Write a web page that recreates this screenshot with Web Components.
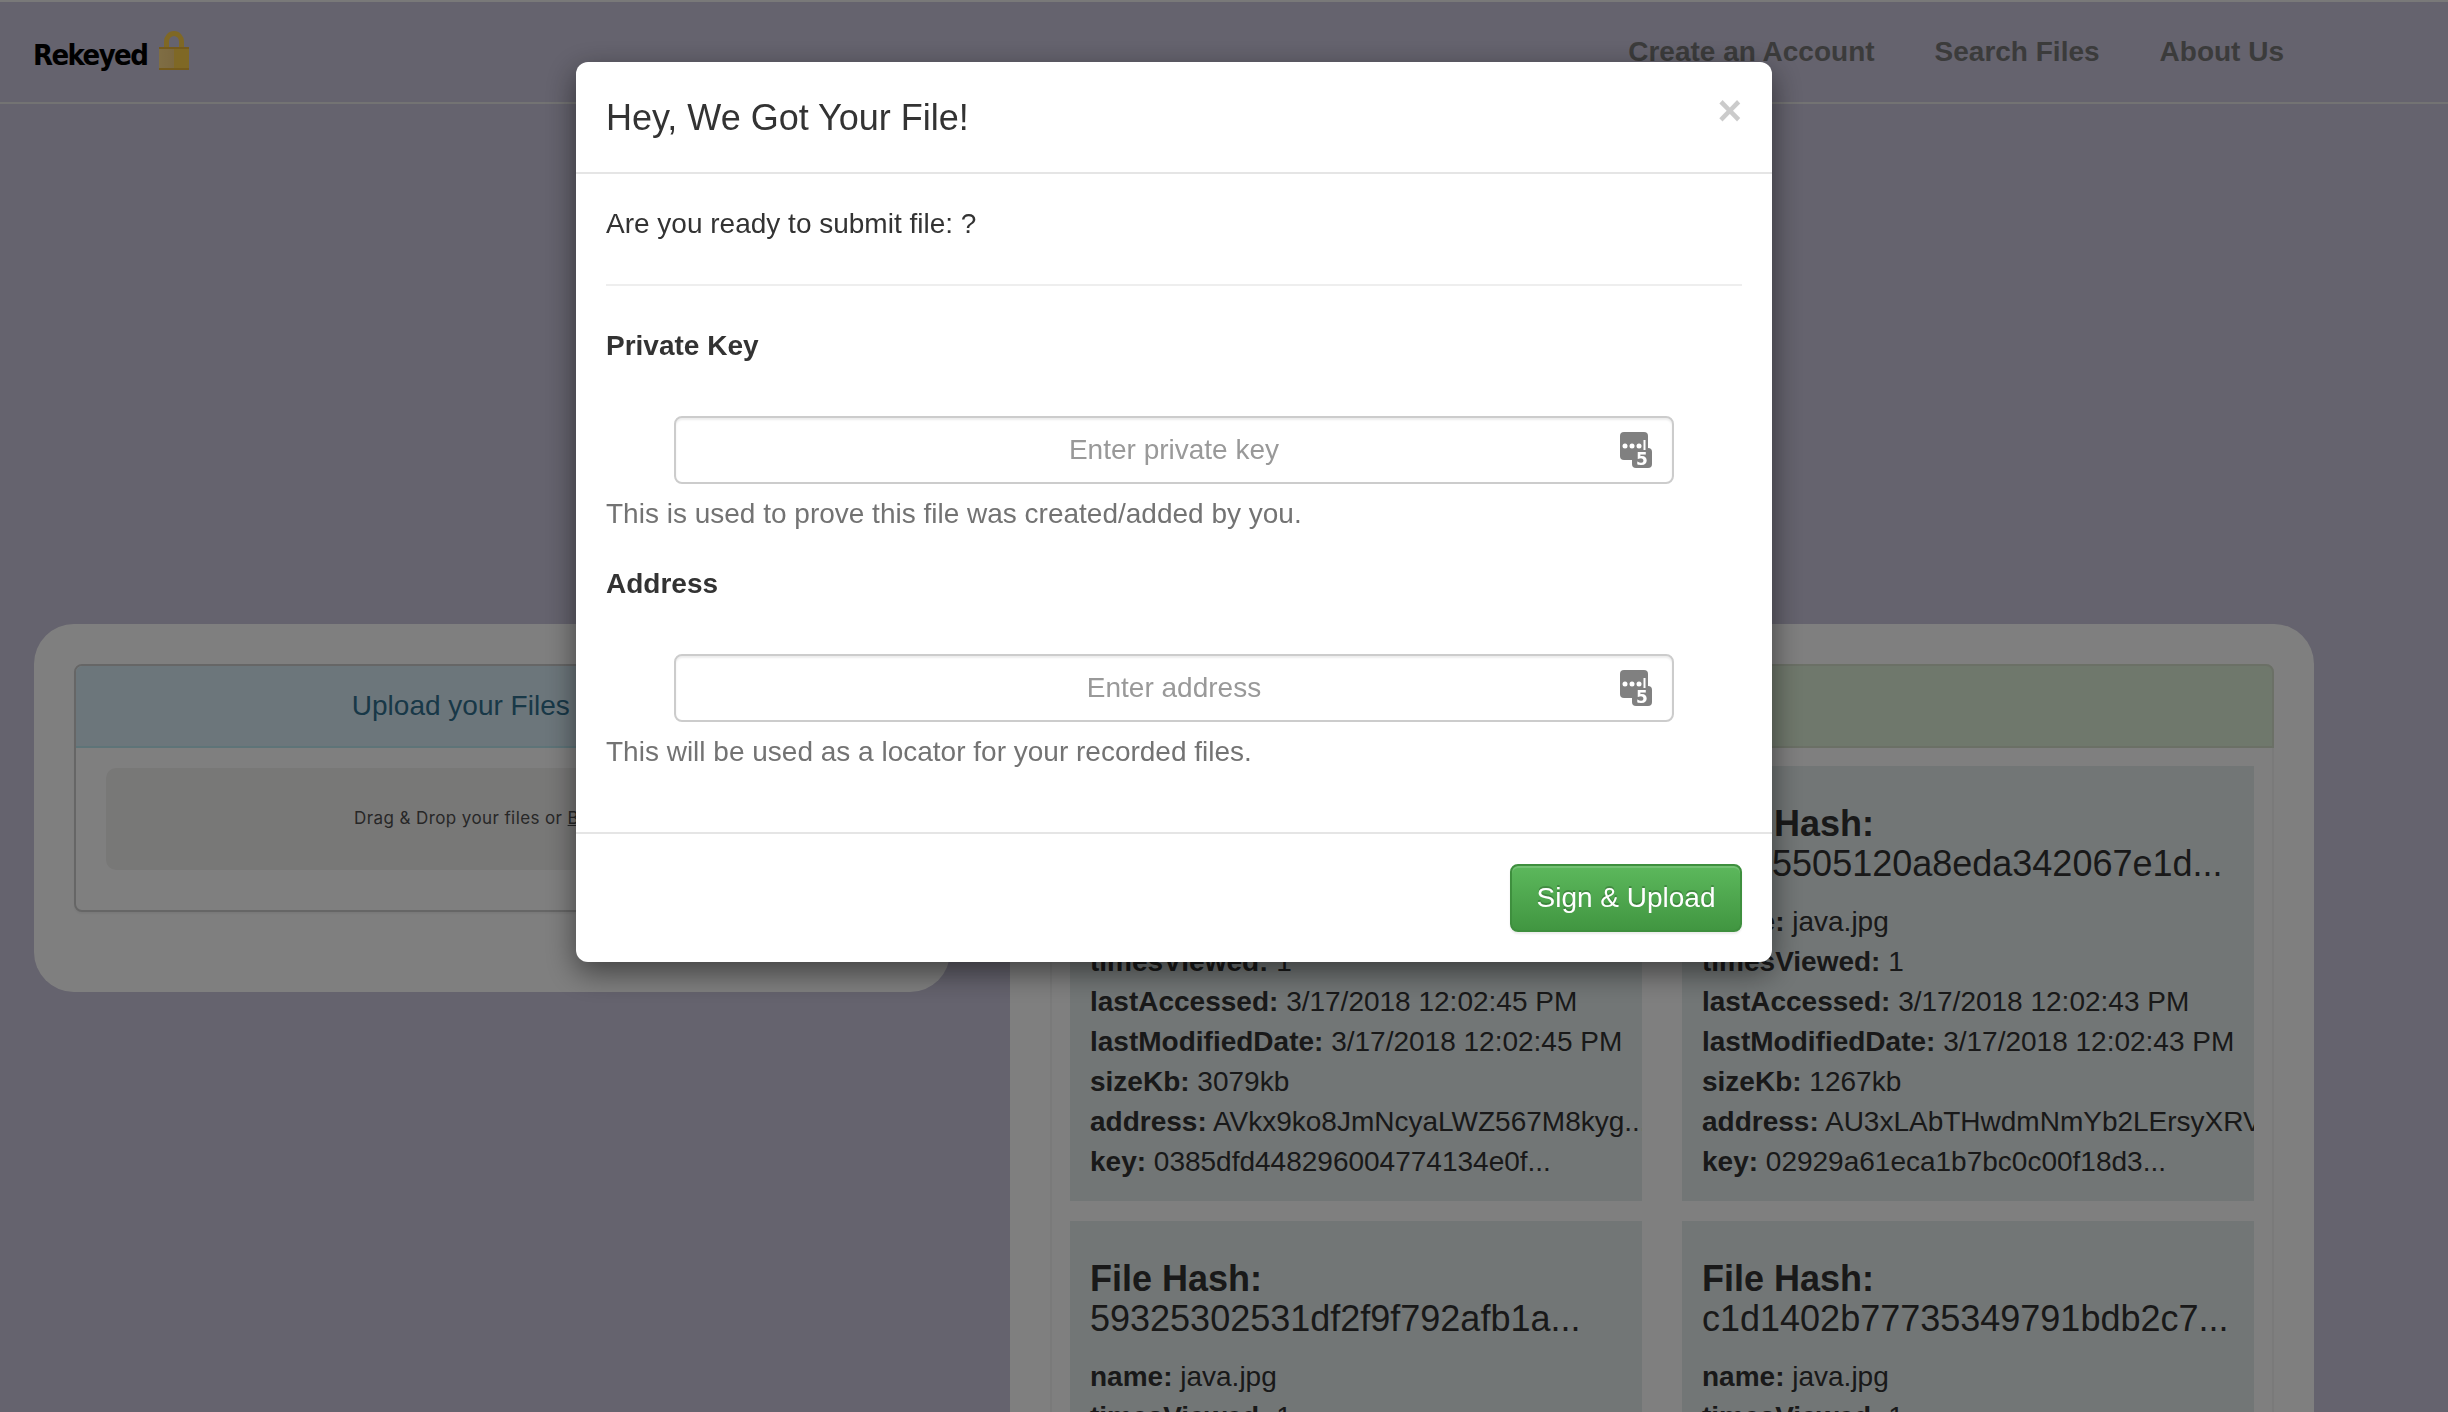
<!DOCTYPE html>
<html>
<head>
<meta charset="utf-8">
<title>Rekeyed</title>
<style>
  html, body { height: 100%; }
  body {
    margin: 0;
    height: 1412px;
    overflow: hidden;
    background: #cac6dc;
    color: #333;
    font: 28px/40px "Liberation Sans", Arial, sans-serif;
  }
</style>
</head>
<body>
<rk-navbar>
  <a slot="links">Create an Account</a>
  <a slot="links">Search Files</a>
  <a slot="links">About Us</a>
</rk-navbar>

<rk-page>
  <rk-panel slot="left" heading="Upload your Files Here" tone="info">
    <rk-dropzone>Drag &amp; Drop your files or <u>Browse</u></rk-dropzone>
  </rk-panel>
  <rk-panel slot="right" heading="Recorded Files" tone="success" flush>
    <rk-file-grid>
      <rk-file-card hash="d7e2a1f09c4b7f3e60d81a2c5...">
        <rk-row label="name">java.jpg</rk-row>
        <rk-row label="timesViewed">1</rk-row>
        <rk-row label="lastAccessed">3/17/2018 12:02:45 PM</rk-row>
        <rk-row label="lastModifiedDate">3/17/2018 12:02:45 PM</rk-row>
        <rk-row label="sizeKb">3079kb</rk-row>
        <rk-row label="address">AVkx9ko8JmNcyaLWZ567M8kyg...</rk-row>
        <rk-row label="key">0385dfd448296004774134e0f...</rk-row>
      </rk-file-card>
      <rk-file-card hash="a3f45505120a8eda342067e1d...">
        <rk-row label="name">java.jpg</rk-row>
        <rk-row label="timesViewed">1</rk-row>
        <rk-row label="lastAccessed">3/17/2018 12:02:43 PM</rk-row>
        <rk-row label="lastModifiedDate">3/17/2018 12:02:43 PM</rk-row>
        <rk-row label="sizeKb">1267kb</rk-row>
        <rk-row label="address">AU3xLAbTHwdmNmYb2LErsyXRV...</rk-row>
        <rk-row label="key">02929a61eca1b7bc0c00f18d3...</rk-row>
      </rk-file-card>
      <rk-file-card hash="59325302531df2f9f792afb1a...">
        <rk-row label="name">java.jpg</rk-row>
        <rk-row label="timesViewed">1</rk-row>
      </rk-file-card>
      <rk-file-card hash="c1d1402b77735349791bdb2c7...">
        <rk-row label="name">java.jpg</rk-row>
        <rk-row label="timesViewed">1</rk-row>
      </rk-file-card>
    </rk-file-grid>
  </rk-panel>
</rk-page>

<rk-modal>
  <span slot="title">Hey, We Got Your File!</span>
  <p>Are you ready to submit file: ?</p>
  <hr style="margin: 40px 0; border: 0; border-top: 2px solid #eee">
  <rk-key-field label="Private Key" placeholder="Enter private key">This is used to prove this file was created/added by you.</rk-key-field>
  <rk-key-field label="Address" placeholder="Enter address">This will be used as a locator for your recorded files.</rk-key-field>
  <span slot="action">Sign &amp; Upload</span>
</rk-modal>

<script>
/** Create an HTML template element from a string template. */
const html = (strings, ...expressions) => {
  const template = document.createElement('template')
  template.innerHTML = strings.reduce((result, str, i) => result + str + (expressions[i] ?? ''), '')
  return template
}

/** Base class: clones the static template into an open shadow root. */
class Base extends HTMLElement {
  constructor() {
    super()
    this.attachShadow({ mode: 'open' })
    this.shadowRoot.appendChild(this.constructor.template.content.cloneNode(true))
  }
}

class Navbar extends Base {
  static template = html`
    <style>
      :host {
        display: flex;
        align-items: center;
        justify-content: space-between;
        box-sizing: border-box;
        height: 104px;
        border-top: 2px solid #f2f2f2;
        border-bottom: 2px solid #e7e7e7;
        padding: 0 164px 0 33px;
      }
      .brand {
        display: flex;
        align-items: center;
        gap: 12px;
        color: #000;
        font: 700 29px/40px "DejaVu Sans", sans-serif;
        font-stretch: condensed;
        letter-spacing: -1.6px;
      }
      .brand span { margin-top: 6px; }
      svg { display: block; margin-top: -2px; }
      nav {
        display: flex;
        gap: 60px;
        font-weight: 700;
        color: #777;
      }
      ::slotted(a) { color: #777; }
    </style>
    <div class="brand">
      <span>Rekeyed</span>
      <svg width="30" height="40" viewBox="0 0 30 40">
        <defs>
          <linearGradient id="fade" x1="0" x2="1" y1="0" y2="0">
            <stop offset="0" stop-color="#ffdc88"/>
            <stop offset=".5" stop-color="#f6d080"/>
            <stop offset=".5" stop-color="#ffd04a"/>
            <stop offset="1" stop-color="#ffd04a"/>
          </linearGradient>
        </defs>
        <path d="M7.5 17V10.5a7.5 8 0 0 1 15 0V17" fill="none" stroke="#ffd04a" stroke-width="5"/>
        <rect x="0" y="16" width="30" height="23" fill="url(#fade)"/>
        <rect x="0" y="16" width="30" height="2" fill="#e8b438"/>
        <rect x="0" y="37" width="30" height="2" fill="#e8b438"/>
      </svg>
    </div>
    <nav><slot name="links"></slot></nav>
  `
}

class Page extends Base {
  static template = html`
    <style>
      :host {
        display: flex;
        align-items: flex-start;
        gap: 60px;
        padding: 520px 0 0 34px;
      }
      .left { display: block; width: 916px; flex: none; }
      .right { display: block; width: 1304px; flex: none; }
    </style>
    <div class="left"><slot name="left"></slot></div>
    <div class="right"><slot name="right"></slot></div>
  `
}

class Panel extends Base {
  static template = html`
    <style>
      :host {
        display: block;
        background: #fff;
        border-radius: 40px;
        padding: 40px 40px 80px;
      }
      .box {
        border: 2px solid #ccc;
        border-radius: 8px;
        box-shadow: 0 2px 2px rgba(0, 0, 0, .05);
        background: #fff;
      }
      .heading {
        height: 80px;
        line-height: 80px;
        padding-left: 6px;
        text-align: center;
        color: #31708f;
        background: #d9edf7;
        border-bottom: 2px solid #bce8f1;
        border-radius: 6px 6px 0 0;
      }
      :host([tone=success]) .heading {
        color: #3c763d;
        background: #dff0d8;
      }
      .body { padding: 20px 30px 40px; }
      :host([flush]) .box {
        border-color: #f4f4f4;
        border-bottom: 0;
        box-shadow: none;
      }
      :host([flush]) .heading {
        margin: -2px -2px 0;
        border: 2px solid #d6e0cc;
        border-radius: 8px 8px 0 0;
      }
      :host([flush]) .body { padding: 18px 18px 0; }
    </style>
    <div class="box">
      <div class="heading"></div>
      <div class="body"><slot></slot></div>
    </div>
  `

  connectedCallback() {
    this.shadowRoot.querySelector('.heading').textContent = this.getAttribute('heading')
  }
}

class Dropzone extends Base {
  static template = html`
    <style>
      :host {
        display: block;
        height: 102px;
        border-radius: 10px;
        background: #f1f0ef;
        color: #4f4f4f;
        font: 17px/100px Inter, "Open Sans", sans-serif;
        letter-spacing: .4px;
        text-align: center;
      }
    </style>
    <slot></slot>
  `
}

class FileGrid extends Base {
  static template = html`
    <style>
      :host {
        display: grid;
        grid-template-columns: 572px 572px;
        gap: 20px 40px;
      }
    </style>
    <slot></slot>
  `
}

class FileCard extends Base {
  static template = html`
    <style>
      :host {
        display: block;
        overflow: hidden;
        background: #e4ecec;
        padding: 38px 0 19px 20px;
      }
      h3 {
        margin: 0 0 18px;
        font-size: 36px;
        line-height: 40px;
        font-weight: 500;
        white-space: nowrap;
      }
      b { display: block; font-weight: 700; }
    </style>
    <h3><b>File Hash:</b><span class="hash"></span></h3>
    <slot></slot>
  `

  connectedCallback() {
    this.shadowRoot.querySelector('.hash').textContent = this.getAttribute('hash')
  }
}

class Row extends Base {
  static template = html`
    <style>
      :host { display: block; white-space: nowrap; }
      b { font-weight: 700; }
    </style>
    <b></b> <slot></slot>
  `

  connectedCallback() {
    this.shadowRoot.querySelector('b').textContent = `${this.getAttribute('label')}:`
  }
}

class KeyField extends Base {
  static template = html`
    <style>
      :host { display: block; margin-bottom: 30px; }
      label { display: block; font-weight: 700; margin-bottom: 50px; }
      .input {
        position: relative;
        display: flex;
        box-sizing: border-box;
        width: 1000px;
        height: 68px;
        margin-left: 68px;
        border: 2px solid #ccc;
        border-radius: 8px;
        box-shadow: inset 0 2px 2px rgba(0, 0, 0, .075);
      }
      input {
        box-sizing: border-box;
        flex: 1;
        min-width: 0;
        margin: 0 60px;
        border: 0;
        outline: 0;
        background: none;
        padding: 0;
        text-align: center;
        color: #555;
        font: 28px "Liberation Sans", Arial, sans-serif;
      }
      input::placeholder { color: #999; opacity: 1; }
      svg { position: absolute; right: 18px; top: 14px; }
      text { font: 700 17px "DejaVu Sans", sans-serif; }
      .help { margin-top: 10px; color: #737373; }
    </style>
    <label></label>
    <div class="input">
      <input type="text">
      <svg width="34" height="38" viewBox="0 0 34 38">
        <rect x="0" y="0" width="28" height="28" rx="4" fill="#808080"/>
        <rect x="12" y="16" width="20" height="20" rx="4" fill="#808080"/>
        <g fill="#fff">
          <circle cx="5" cy="14" r="2.5"/>
          <circle cx="12" cy="14" r="2.5"/>
          <circle cx="19" cy="14" r="2.5"/>
          <rect x="23.5" y="8" width="2" height="10"/>
        </g>
        <text x="22" y="33" fill="#fff" text-anchor="middle">5</text>
      </svg>
    </div>
    <div class="help"><slot></slot></div>
  `

  connectedCallback() {
    const { shadowRoot } = this
    shadowRoot.querySelector('label').textContent = this.getAttribute('label')
    shadowRoot.querySelector('input').placeholder = this.getAttribute('placeholder')
  }
}

class Modal extends Base {
  static template = html`
    <style>
      :host {
        position: fixed;
        inset: 0;
        display: block;
        background: rgba(0, 0, 0, .5);
      }
      .dialog {
        position: absolute;
        left: 576px;
        top: 62px;
        width: 1196px;
        height: 900px;
        box-sizing: border-box;
        background: #fff;
        border-radius: 12px;
        box-shadow: 0 10px 30px rgba(0, 0, 0, .5);
        display: flex;
        flex-direction: column;
      }
      header {
        position: relative;
        box-sizing: border-box;
        height: 112px;
        padding: 31px 30px 0;
        border-bottom: 2px solid #e5e5e5;
        font-size: 36px;
        line-height: 50px;
      }
      .close {
        position: absolute;
        right: 30px;
        top: 24px;
        color: #000;
        opacity: .2;
        font-size: 42px;
        line-height: 50px;
        font-weight: 700;
      }
      .body { flex: 1; padding: 30px 30px 0; }
      ::slotted(p) { margin: 0; }
      footer {
        display: flex;
        justify-content: flex-end;
        padding: 30px;
        border-top: 2px solid #e5e5e5;
      }
      button {
        box-sizing: border-box;
        width: 232px;
        height: 68px;
        padding: 0;
        border: 2px solid #3e8f3e;
        border-radius: 8px;
        color: #fff;
        font: 28px "Liberation Sans", Arial, sans-serif;
        background: linear-gradient(#5cb85c, #419641);
        box-shadow: inset 0 2px 0 rgba(255, 255, 255, .15), 0 2px 2px rgba(0, 0, 0, .075);
        text-shadow: 0 -2px 0 rgba(0, 0, 0, .2);
      }
    </style>
    <div class="dialog">
      <header><slot name="title"></slot><span class="close">&times;</span></header>
      <div class="body"><slot></slot></div>
      <footer><button><slot name="action"></slot></button></footer>
    </div>
  `
}

customElements.define('rk-navbar', Navbar)
customElements.define('rk-page', Page)
customElements.define('rk-panel', Panel)
customElements.define('rk-dropzone', Dropzone)
customElements.define('rk-file-grid', FileGrid)
customElements.define('rk-file-card', FileCard)
customElements.define('rk-row', Row)
customElements.define('rk-key-field', KeyField)
customElements.define('rk-modal', Modal)
</script>
</body>
</html>
